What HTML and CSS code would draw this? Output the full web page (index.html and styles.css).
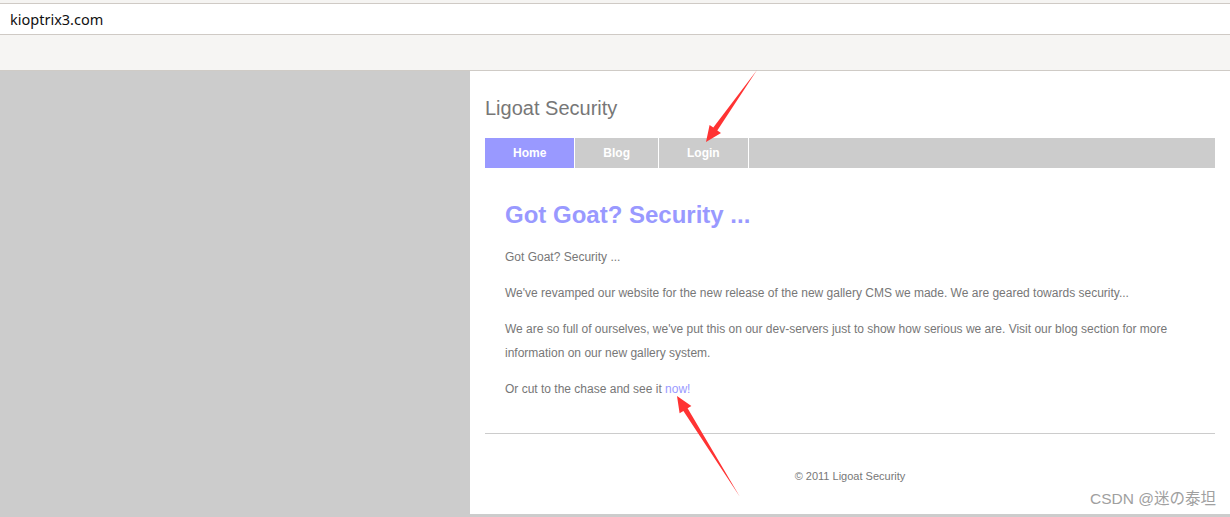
FILE: index.html
```html
<!DOCTYPE html>
<html>
<head>
<meta charset="utf-8">
<title>Ligoat Security</title>
<link rel="stylesheet" href="styles.css">
</head>
<body>
<div class="chrome">
  <div class="chrome-top"></div>
  <div class="address">kioptrix3.com</div>
  <div class="toolbar"></div>
</div>
<div class="page">
  <div class="side"></div>
  <div class="site">
    <div class="sheet">
      <div class="logo">Ligoat Security</div>
      <ul class="nav">
        <li class="nav-item active">Home</li>
        <li class="nav-item">Blog</li>
        <li class="nav-item">Login</li>
      </ul>
      <div class="content">
        <h1 class="headline">Got Goat? Security ...</h1>
        <p class="para">Got Goat? Security ...</p>
        <p class="para">We've revamped our website for the new release of the new gallery CMS we made. We are geared towards security...</p>
        <p class="para">We are so full of ourselves, we've put this on our dev-servers just to show how serious we are. Visit our blog section for more information on our new gallery system.</p>
        <p class="para">Or cut to the chase and see it <a class="link" href="#">now!</a></p>
      </div>
      <div class="rule"></div>
      <div class="footer">&copy; 2011 Ligoat Security</div>
    </div>
  </div>
</div>
<svg class="arrows" width="1230" height="517" viewBox="0 0 1230 517">
  <polygon class="arrow" points="757,70 717.3,130.5 721,133.1 706,142 709.6,124.9 713.3,127.5"/>
  <polygon class="arrow" points="740,497 687.6,408.3 691.4,405.9 677,396 679.6,413.3 683.4,410.9"/>
</svg>
<div class="watermark">CSDN @迷の泰坦</div>
</body>
</html>
```
FILE: styles.css
```css
html, body {
  margin: 0;
  padding: 0;
}
body {
  width: 1230px;
  height: 517px;
  overflow: hidden;
  position: relative;
  background: #cccccc;
  font-family: "Liberation Sans", Arial, sans-serif;
}
.chrome-top {
  height: 3px;
  background: #f5f4f2;
  border-bottom: 1px solid #cfcac5;
}
.address {
  height: 30px;
  line-height: 30px;
  background: #ffffff;
  border-bottom: 1px solid #cfcac5;
  padding-left: 10px;
  font-family: "Noto Sans", "Open Sans", sans-serif;
  font-size: 14.5px;
  color: #111111;
}
.toolbar {
  height: 35px;
  background: #f6f5f3;
  border-bottom: 1px solid #cfcbc6;
}
.page {
  display: flex;
  height: 446px;
}
.side {
  width: 470px;
  flex: none;
  background: #cccccc;
}
.site {
  flex: 1;
  background: #cccccc;
}
.sheet {
  background: #ffffff;
  height: 443px;
  padding: 0 15px;
  box-sizing: border-box;
  overflow: hidden;
}
.logo {
  padding-top: 26px;
  font-size: 20px;
  line-height: 23px;
  color: #777777;
}
.nav {
  list-style: none;
  margin: 18px 0 0;
  padding: 0;
  display: flex;
  height: 30px;
  background: #cccccc;
}
.nav-item {
  padding: 0 28px;
  line-height: 30px;
  font-size: 12px;
  font-weight: bold;
  color: #ffffff;
  border-right: 1px solid #ffffff;
}
.nav-item.active {
  background: #9999ff;
}
.content {
  padding: 0 20px;
}
.headline {
  margin: 33px 0 16px;
  font-size: 24px;
  line-height: 28px;
  font-weight: bold;
  color: #9999ff;
}
.para {
  margin: 0 0 12px;
  font-size: 12px;
  line-height: 24px;
  color: #777777;
}
.link {
  color: #9999ff;
  text-decoration: none;
}
.rule {
  margin-top: 32px;
  height: 1px;
  background: #cccccc;
}
.footer {
  margin-top: 34px;
  text-align: center;
  font-size: 11px;
  line-height: 16px;
  color: #777777;
}
.arrows {
  position: absolute;
  left: 0;
  top: 0;
}
.arrow {
  fill: #ff3333;
}
.watermark {
  position: absolute;
  left: 1090px;
  top: 489px;
  font-family: "Liberation Sans", "Noto Sans CJK SC", sans-serif;
  font-size: 15.5px;
  line-height: 20px;
  color: #a0a0a0;
  white-space: nowrap;
}
```
